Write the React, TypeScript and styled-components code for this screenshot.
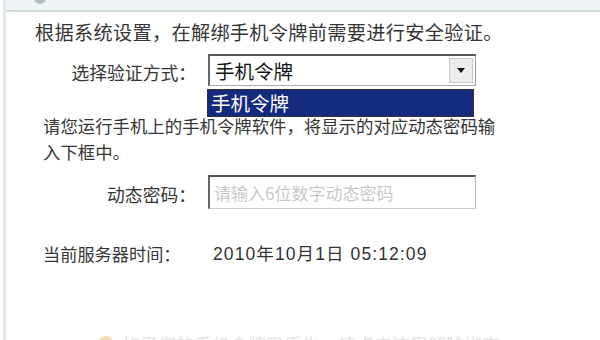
import React from "react";
import styled, { createGlobalStyle } from "styled-components";

const Global = createGlobalStyle`
  html, body { margin: 0; padding: 0; background: #ffffff; }
  body { font-family: "Noto Sans CJK SC", "Noto Sans", sans-serif; }
`;

const Frame = styled.div`
  width: 597px;
  height: 340px;
  overflow: hidden;
  box-sizing: border-box;
  border-left: 3px solid #e2e6e8;
  margin-left: 3px;
  color: #363636;
  display: flex;
  flex-direction: column;
`;

const Header = styled.div`
  height: 10px;
  flex: none;
  background: #eef4f5;
  border-bottom: 2px solid #d3dadc;
  display: flex;
  align-items: flex-start;
  padding-left: 28px;
  overflow: hidden;
`;

const HeaderIcon = styled.div`
  width: 12px;
  height: 12px;
  border-radius: 50%;
  background: #9aa9b3;
  margin-top: -8px;
  opacity: 0.7;
`;

const Para = styled.p<{ $size: number; $lh: number; $mt: number; $pl: number; $ls?: number }>`
  margin: ${(p) => p.$mt}px 0 0 0;
  padding-left: ${(p) => p.$pl}px;
  font-size: ${(p) => p.$size}px;
  line-height: ${(p) => p.$lh}px;
  letter-spacing: ${(p) => p.$ls ?? 0}px;
  white-space: nowrap;
  flex: none;
`;

const FieldRow = styled.div<{ $mt: number }>`
  margin-top: ${(p) => p.$mt}px;
  display: grid;
  grid-template-columns: 202px 268px;
  align-items: center;
  flex: none;
`;

const Label = styled.span`
  text-align: right;
  font-size: 17.8px;
  padding-right: 12px;
  line-height: 24px;
  margin-top: 3px;
`;

const SelectWrap = styled.div`
  position: relative;
  height: 32px;
`;

const SelectBox = styled.div`
  height: 32px;
  box-sizing: border-box;
  border-top: 2px solid #555;
  border-left: 2px solid #666;
  border-right: 1px solid #999;
  border-bottom: 1px solid #aaa;
  background: #fff;
  display: flex;
  align-items: center;
  justify-content: space-between;
`;

const SelectText = styled.span`
  font-size: 19.5px;
  color: #151515;
  padding-left: 5px;
`;

const ArrowBtn = styled.div`
  width: 24px;
  height: 25px;
  margin-right: 2px;
  background: #ececec;
  border: 1px solid #c8c8c8;
  box-sizing: border-box;
  display: flex;
  align-items: center;
  justify-content: center;
`;

const DropList = styled.div`
  position: absolute;
  left: -1px;
  top: 35px;
  width: 267px;
  height: 28px;
  box-sizing: border-box;
  background: #142a7c;
  border: 1px solid #333;
  color: #ffffff;
  font-size: 19.5px;
  line-height: 25px;
  padding-left: 3px;
  z-index: 2;
`;

const InputBox = styled.div`
  height: 34px;
  box-sizing: border-box;
  border-top: 2px solid #555;
  border-left: 2px solid #666;
  border-right: 1px solid #bbb;
  border-bottom: 1px solid #ccc;
  background: #fff;
  display: flex;
  align-items: center;
  padding-left: 4px;
  font-size: 17px;
  color: #c9c9c9;
`;

const TimeRow = styled.div`
  margin-top: 33px;
  padding-left: 37px;
  display: flex;
  align-items: center;
  line-height: 24px;
  flex: none;
`;

const TimeLabel = styled.span`
  font-size: 17.2px;
  width: 170px;
`;

const TimeValue = styled.span`
  font-family: "Liberation Sans", "Noto Sans CJK SC", sans-serif;
  font-size: 17.5px;
  letter-spacing: 1.1px;
  color: #333;
`;

const FooterLine = styled.div`
  margin-top: 66px;
  padding-left: 92px;
  display: flex;
  align-items: center;
  gap: 8px;
  font-size: 18px;
  line-height: 24px;
  color: #e4e4e4;
  flex: none;
`;

const FooterIcon = styled.span`
  width: 16px;
  height: 16px;
  border-radius: 50%;
  background: #f6dfb8;
`;

export default function App() {
  return (
    <>
      <Global />
      <Frame>
        <Header>
          <HeaderIcon />
        </Header>
        <Para $size={19.2} $lh={24} $mt={8} $pl={29} $ls={0.3}>
          根据系统设置，在解绑手机令牌前需要进行安全验证。
        </Para>
        <FieldRow $mt={10}>
          <Label>选择验证方式：</Label>
          <SelectWrap>
            <SelectBox>
              <SelectText>手机令牌</SelectText>
              <ArrowBtn>
                <svg width="10" height="6" viewBox="0 0 10 6">
                  <path d="M1 0 H9 L5 5 Z" fill="#111" />
                </svg>
              </ArrowBtn>
            </SelectBox>
            <DropList>手机令牌</DropList>
          </SelectWrap>
        </FieldRow>
        <Para $size={17.4} $lh={26} $mt={27} $pl={37}>
          请您运行手机上的手机令牌软件，将显示的对应动态密码输
          <br />
          入下框中。
        </Para>
        <FieldRow $mt={10}>
          <Label>动态密码：</Label>
          <InputBox>请输入6位数字动态密码</InputBox>
        </FieldRow>
        <TimeRow>
          <TimeLabel>当前服务器时间：</TimeLabel>
          <TimeValue>2010年10月1日 05:12:09</TimeValue>
        </TimeRow>
        <FooterLine>
          <FooterIcon />
          <span>如果您的手机令牌已丢失，请点击这里解除绑定</span>
        </FooterLine>
      </Frame>
    </>
  );
}
